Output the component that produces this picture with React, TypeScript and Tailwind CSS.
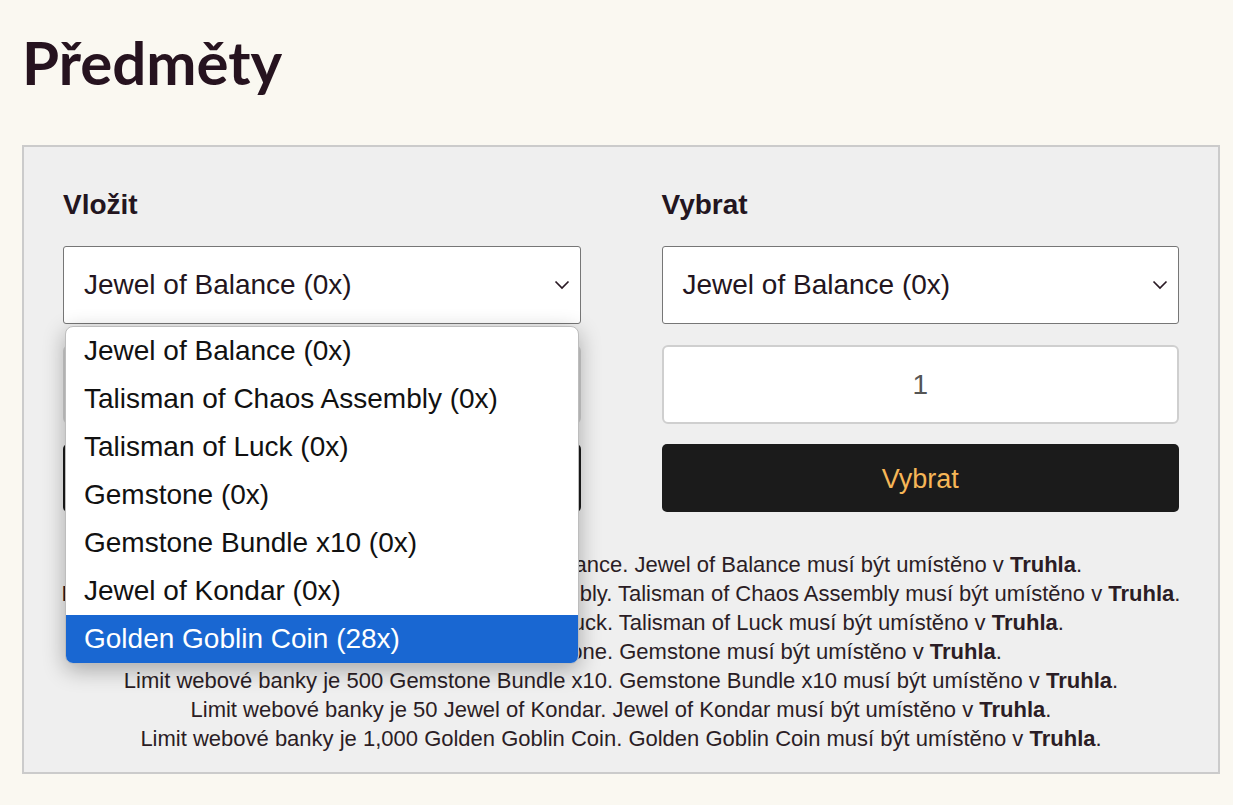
import React from "react";

const items = [
  "Jewel of Balance (0x)",
  "Talisman of Chaos Assembly (0x)",
  "Talisman of Luck (0x)",
  "Gemstone (0x)",
  "Gemstone Bundle x10 (0x)",
  "Jewel of Kondar (0x)",
  "Golden Goblin Coin (28x)",
];

const limits: [string, string][] = [
  ["10,000", "Jewel of Balance"],
  ["500", "Talisman of Chaos Assembly"],
  ["500", "Talisman of Luck"],
  ["500", "Gemstone"],
  ["500", "Gemstone Bundle x10"],
  ["50", "Jewel of Kondar"],
  ["1,000", "Golden Goblin Coin"],
];

function Chevron() {
  return (
    <svg width="16" height="10" viewBox="0 0 16 10" className="shrink-0">
      <polyline points="1.5,1.5 8,8 14.5,1.5" fill="none" stroke="#2a1a24" strokeWidth="1.7" />
    </svg>
  );
}

function Select() {
  return (
    <div className="h-[78px] w-full rounded-[3px] border border-[#767676] bg-white flex items-center justify-between pl-[20px] pr-[10px] text-[28px] text-[#231520]">
      <span>Jewel of Balance (0x)</span>
      <Chevron />
    </div>
  );
}

function Column({ title, open }: { title: string; open?: boolean }) {
  return (
    <div className="relative flex flex-col">
      <div className="text-[28px] font-bold leading-[32px] text-[#231520] mb-[25px]">{title}</div>
      <Select />
      <div className="mt-[21px] h-[79px] rounded-[6px] border-2 border-[#cfcfcf] bg-white flex items-center justify-center text-[28px] text-[#555]">
        1
      </div>
      <div className="mt-[20px] h-[68px] rounded-[5px] bg-[#1b1b1b] flex items-center justify-center pt-[3px] text-[27px] text-[#f6b657]">
        {title}
      </div>
      {open && (
        <div className="absolute left-[2px] top-[137px] w-[514px] rounded-[8px] border border-[#bdbdbd] bg-white overflow-hidden shadow-[0_6px_22px_rgba(0,0,0,0.3)] z-10">
          {items.map((it, i) => (
            <div
              key={it}
              className={
                "h-[48px] flex items-center pl-[18px] text-[28px] " +
                (i === items.length - 1 ? "bg-[#1967d2] text-white" : "text-[#111]")
              }
            >
              {it}
            </div>
          ))}
        </div>
      )}
    </div>
  );
}

export default function App() {
  return (
    <div className="min-h-screen w-full bg-[#faf8f1] pl-[22px] pt-[32px] pb-[30px]" style={{ fontFamily: '"Liberation Sans", Arial, sans-serif' }}>
      <h1
        className="text-[60px] leading-[60px] font-bold text-[#26131f]"
        style={{ fontFamily: 'Lato, "Noto Sans", sans-serif' }}
      >
        Předměty
      </h1>
      <div className="mt-[53px] w-[1198px] border-2 border-[#cbcbcb] bg-[#efefef] px-[39px] pt-[42px] pb-[19px]">
        <div className="grid grid-cols-2 gap-x-[81px]">
          <Column title="Vložit" open />
          <Column title="Vybrat" />
        </div>
        <div className="mt-[38px] -mx-[30px] text-center text-[22px] leading-[29px] text-[#2b1d25]">
          {limits.map(([n, name]) => (
            <div key={name} className="whitespace-nowrap">
              Limit webové banky je {n} {name}. {name} musí být umístěno v <b>Truhla</b>.
            </div>
          ))}
        </div>
      </div>
    </div>
  );
}
